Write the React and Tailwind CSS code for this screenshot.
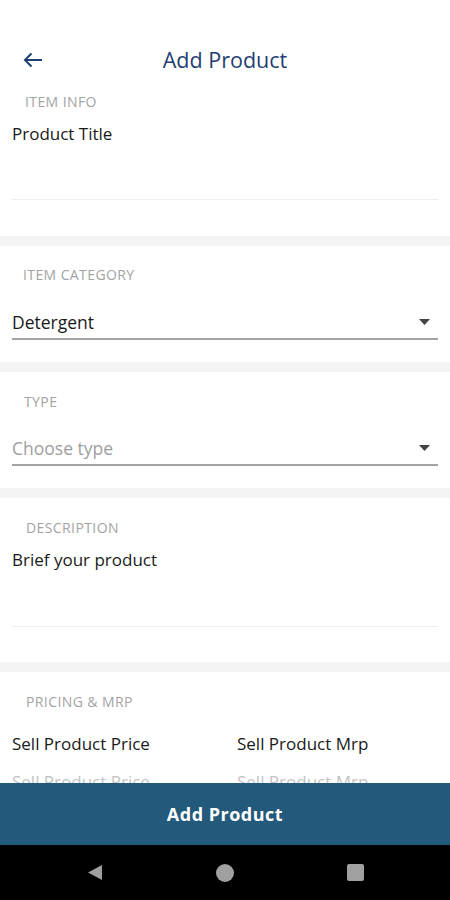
import React from 'react';

const font = { fontFamily: '"Open Sans", "Noto Sans", sans-serif' };

const Label = ({ children, className = '' }) => (
  <div className={`h-4 text-[14px] leading-4 tracking-[0.4px] text-[#a3a3a3] uppercase ${className}`}>{children}</div>
);

const Caret = () => (
  <svg width="11" height="6" viewBox="0 0 11 6" className="mr-[8px]">
    <path d="M0 0h11L5.5 6z" fill="#444" />
  </svg>
);

const Select = ({ value, placeholder, className = '' }) => (
  <div className={`mx-3 flex items-center justify-between border-b-2 border-[#a3a3a3] pb-[6px] ${className}`}>
    <span className={`h-5 text-[17.5px] leading-5 ${value ? 'text-[#1a1a1a]' : 'text-[#9e9e9e]'}`}>
      {value || placeholder}
    </span>
    <Caret />
  </div>
);

const Band = () => <div className="h-[10px] bg-[#f4f4f4]" />;

export default function App() {
  return (
    <div className="flex h-[900px] w-[450px] flex-col bg-white" style={font}>
      <div className="flex-1 overflow-hidden">
        {/* item info */}
        <div className="pt-[40px] pb-[36px]">
          <div className="relative flex h-10 items-center justify-center">
            <svg width="20" height="16" viewBox="0 0 20 16" className="absolute left-[23px]">
              <path d="M19 8H2M8.5 1.5L2 8l6.5 6.5" fill="none" stroke="#1f3f73" strokeWidth="2" />
            </svg>
            <span className="text-[21.5px] text-[#1f3f73]">Add Product</span>
          </div>
          <Label className="mt-[14px] pl-[25px]">Item Info</Label>
          <div className="mt-[14px] h-5 pl-3 text-[17px] leading-5 text-[#1a1a1a]">Product Title</div>
          <div className="mx-3 mt-[55px] h-px bg-[#eeeeee]" />
        </div>
        <Band />

        {/* category */}
        <div className="pt-[21px] pb-[22px]">
          <Label className="pl-[23px]">Item Category</Label>
          <Select value="Detergent" className="mt-[29px]" />
        </div>
        <Band />

        {/* type */}
        <div className="pt-[22px] pb-[22px]">
          <Label className="pl-[24px]">Type</Label>
          <Select placeholder="Choose type" className="mt-[28px]" />
        </div>
        <Band />

        {/* description */}
        <div className="pt-[22px] pb-[35px]">
          <Label className="pl-[26px]">Description</Label>
          <div className="mt-[14px] h-5 pl-3 text-[17px] leading-5 text-[#1a1a1a]">Brief your product</div>
          <div className="mx-3 mt-[56px] h-px bg-[#eeeeee]" />
        </div>
        <Band />

        {/* pricing */}
        <div className="pt-[22px]">
          <Label className="pl-[26px]">Pricing &amp; MRP</Label>
          <div className="mt-[24px] grid grid-cols-2 gap-x-[24px] px-3">
            <div className="h-5 text-[17px] leading-5 text-[#1a1a1a]">Sell Product Price</div>
            <div className="h-5 text-[17px] leading-5 text-[#1a1a1a]">Sell Product Mrp</div>
            <div className="mt-[18px] h-5 text-[17px] leading-5 text-[#c4c4c4]">Sell Product Price</div>
            <div className="mt-[18px] h-5 text-[17px] leading-5 text-[#c4c4c4]">Sell Product Mrp</div>
          </div>
        </div>
      </div>

      <button className="flex h-[62px] shrink-0 items-center justify-center bg-[#235a7c] text-[18px] font-bold tracking-[0.5px] text-white">
        Add Product
      </button>

      <div className="flex h-[55px] shrink-0 items-center justify-between bg-black pl-[87px] pr-[86px]">
        <svg width="16" height="17" viewBox="0 0 16 17">
          <path d="M15 1v15L1 8.5z" fill="#a0a0a0" />
        </svg>
        <div className="h-[18px] w-[18px] rounded-full bg-[#a0a0a0]" />
        <div className="h-[17px] w-[17px] rounded-[2px] bg-[#a0a0a0]" />
      </div>
    </div>
  );
}
